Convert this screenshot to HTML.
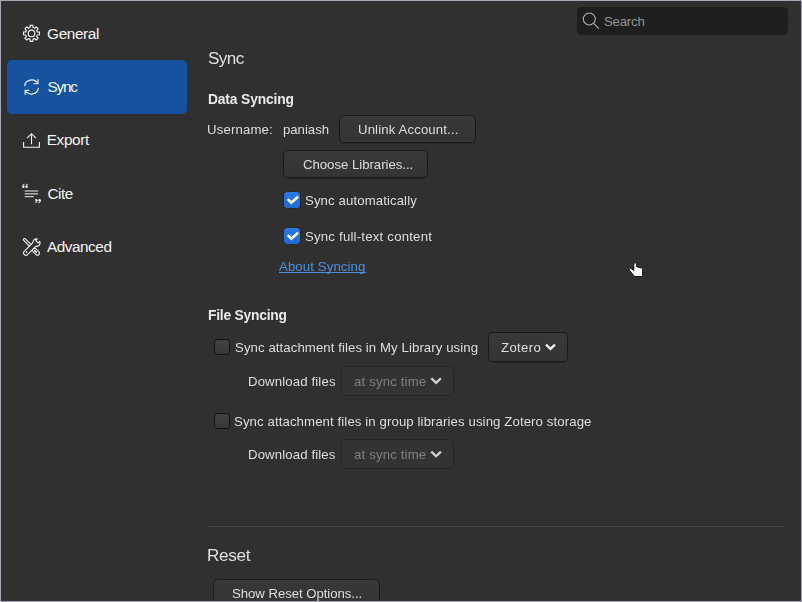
<!DOCTYPE html>
<html>
<head>
<meta charset="utf-8">
<title>Zotero Settings</title>
<style>
html,body{margin:0;padding:0;}
body{width:802px;height:602px;overflow:hidden;background:#303030;font-family:"Liberation Sans",sans-serif;color:#e6e6e6;font-size:13px;position:relative;}
#frame{position:absolute;left:0;top:0;width:800px;height:600px;border:1px solid #a9a7b6;pointer-events:none;z-index:10;}
.abs{position:absolute;white-space:nowrap;}
.g{will-change:transform;}
.btn{position:absolute;box-sizing:border-box;border:1px solid #1a1a1a;border-radius:5px;background:linear-gradient(#383838,#343434);box-shadow:0 1px 0 rgba(0,0,0,0.18);}
.btn.dis{background:#333333;border-color:#252525;box-shadow:none;}
.cb{position:absolute;box-sizing:border-box;width:16px;height:16px;border-radius:3.5px;}
.cb.on{background:linear-gradient(#2879e3,#1f6cd2);box-shadow:0 0 0 0.6px rgba(30,22,16,0.55);}
.cb.off{background:linear-gradient(#434343,#373737);border:1px solid #111111;}
svg{position:absolute;left:0;top:0;overflow:visible;}
</style>
</head>
<body>

<!-- sidebar selection -->
<div style="position:absolute;left:7px;top:60px;width:180px;height:54px;border-radius:5px;background:#15539e;"></div>

<!-- search box -->
<div style="position:absolute;left:577px;top:7px;width:211px;height:28px;border-radius:4.5px;background:#1e1e1e;"></div>

<!-- buttons -->
<div class="btn" style="left:339px;top:115px;width:137px;height:28px;"></div>
<div class="btn" style="left:283px;top:150px;width:145px;height:28px;"></div>
<div class="btn" style="left:488px;top:332px;width:80px;height:30px;"></div>
<div class="btn dis" style="left:341px;top:366px;width:113px;height:30px;"></div>
<div class="btn dis" style="left:341px;top:439px;width:113px;height:30px;"></div>
<div class="btn" style="left:213px;top:579px;width:167px;height:30px;"></div>

<!-- checkboxes -->
<div class="cb on" style="left:284px;top:192px;"></div>
<div class="cb on" style="left:284px;top:228px;"></div>
<div class="cb off" style="left:214px;top:339px;"></div>
<div class="cb off" style="left:214px;top:413px;"></div>

<!-- separator -->
<div style="position:absolute;left:208px;top:526px;width:577px;height:1px;background:#434343;"></div>

<!-- link underline -->
<div style="position:absolute;left:279px;top:272px;width:87px;height:1px;background:#4a90e2;"></div>

<div class="abs" style="left:47.10px;top:26.05px;font-size:15.3px;font-weight:400;color:#f4f4f4;letter-spacing:-0.354px;line-height:15.3px;">General</div>
<div class="abs" style="left:47.40px;top:79.05px;font-size:15.3px;font-weight:400;color:#f4f4f4;letter-spacing:-1.153px;line-height:15.3px;">Sync</div>
<div class="abs" style="left:46.70px;top:132.05px;font-size:15.3px;font-weight:400;color:#f4f4f4;letter-spacing:-0.312px;line-height:15.3px;">Export</div>
<div class="abs" style="left:47.50px;top:186.05px;font-size:15.3px;font-weight:400;color:#f4f4f4;letter-spacing:-0.498px;line-height:15.3px;">Cite</div>
<div class="abs" style="left:46.90px;top:239.05px;font-size:15.3px;font-weight:400;color:#f4f4f4;letter-spacing:-0.433px;line-height:15.3px;">Advanced</div>
<div class="abs" style="left:603.90px;top:14.83px;font-size:13.2px;font-weight:400;color:#939393;letter-spacing:-0.190px;line-height:13.2px;">Search</div>
<div class="abs g" style="left:207.60px;top:50.44px;font-size:17.2px;font-weight:400;color:#e0e0e0;letter-spacing:-0.639px;line-height:17.2px;">Sync</div>
<div class="abs g" style="left:207.70px;top:93.32px;font-size:13.8px;font-weight:700;color:#e9e9e9;letter-spacing:-0.134px;line-height:13.8px;">Data Syncing</div>
<div class="abs g" style="left:207.40px;top:122.83px;font-size:13.2px;font-weight:400;color:#dedede;letter-spacing:0.146px;line-height:13.2px;">Username:</div>
<div class="abs g" style="left:282.90px;top:122.83px;font-size:13.2px;font-weight:400;color:#dedede;letter-spacing:-0.027px;line-height:13.2px;">paniash</div>
<div class="abs g" style="left:357.90px;top:122.83px;font-size:13.2px;font-weight:400;color:#dedede;letter-spacing:0.132px;line-height:13.2px;">Unlink Account...</div>
<div class="abs g" style="left:302.50px;top:157.83px;font-size:13.2px;font-weight:400;color:#dedede;letter-spacing:-0.023px;line-height:13.2px;">Choose Libraries...</div>
<div class="abs g" style="left:304.90px;top:193.83px;font-size:13.2px;font-weight:400;color:#dedede;letter-spacing:0.109px;line-height:13.2px;">Sync automatically</div>
<div class="abs g" style="left:304.80px;top:229.83px;font-size:13.2px;font-weight:400;color:#dedede;letter-spacing:0.212px;line-height:13.2px;">Sync full-text content</div>
<div class="abs g" style="left:279.40px;top:259.83px;font-size:13.2px;font-weight:400;color:#4a90e2;letter-spacing:0.108px;line-height:13.2px;">About Syncing</div>
<div class="abs g" style="left:207.70px;top:309.32px;font-size:13.8px;font-weight:700;color:#e9e9e9;letter-spacing:-0.213px;line-height:13.8px;">File Syncing</div>
<div class="abs g" style="left:234.60px;top:340.53px;font-size:13.2px;font-weight:400;color:#dedede;letter-spacing:0.084px;line-height:13.2px;">Sync attachment files in My Library using</div>
<div class="abs g" style="left:500.80px;top:340.83px;font-size:13.2px;font-weight:400;color:#dedede;letter-spacing:0.324px;line-height:13.2px;">Zotero</div>
<div class="abs g" style="left:247.50px;top:374.53px;font-size:13.2px;font-weight:400;color:#dedede;letter-spacing:0.133px;line-height:13.2px;">Download files</div>
<div class="abs g" style="left:354.40px;top:374.53px;font-size:13.2px;font-weight:400;color:#808080;letter-spacing:0.162px;line-height:13.2px;">at sync time</div>
<div class="abs g" style="left:234.40px;top:415.13px;font-size:13.2px;font-weight:400;color:#dedede;letter-spacing:0.105px;line-height:13.2px;">Sync attachment files in group libraries using Zotero storage</div>
<div class="abs g" style="left:247.60px;top:447.83px;font-size:13.2px;font-weight:400;color:#dedede;letter-spacing:0.125px;line-height:13.2px;">Download files</div>
<div class="abs g" style="left:354.40px;top:447.83px;font-size:13.2px;font-weight:400;color:#808080;letter-spacing:0.162px;line-height:13.2px;">at sync time</div>
<div class="abs g" style="left:207.10px;top:547.44px;font-size:17.2px;font-weight:400;color:#e0e0e0;letter-spacing:-0.356px;line-height:17.2px;">Reset</div>
<div class="abs g" style="left:232.40px;top:586.53px;font-size:13.2px;font-weight:400;color:#dedede;letter-spacing:-0.047px;line-height:13.2px;">Show Reset Options...</div>

<!-- icons & vector art, page coordinates -->
<svg width="802" height="602" viewBox="0 0 802 602" fill="none">
  <!-- gear -->
  <g stroke="#f4f4f4" stroke-width="1.1" stroke-linejoin="miter">
    <path d="M30.00 27.59L30.20 25.41L32.80 25.41L33.00 27.59A6.0 6.0 0 0 1 34.55 28.23L36.23 26.83L38.07 28.67L36.67 30.35A6.0 6.0 0 0 1 37.31 31.90L39.49 32.10L39.49 34.70L37.31 34.90A6.0 6.0 0 0 1 36.67 36.45L38.07 38.13L36.23 39.97L34.55 38.57A6.0 6.0 0 0 1 33.00 39.21L32.80 41.39L30.20 41.39L30.00 39.21A6.0 6.0 0 0 1 28.45 38.57L26.77 39.97L24.93 38.13L26.33 36.45A6.0 6.0 0 0 1 25.69 34.90L23.51 34.70L23.51 32.10L25.69 31.90A6.0 6.0 0 0 1 26.33 30.35L24.93 28.67L26.77 26.83L28.45 28.23A6.0 6.0 0 0 1 30.00 27.59Z"/>
    <circle cx="31.5" cy="33.4" r="3.3"/>
  </g>
  <!-- sync -->
  <g stroke="#f4f4f4" stroke-width="1.15" stroke-linecap="butt">
    <path d="M24.55 86.1A7 7 0 0 1 37.7 83.7"/>
    <path d="M37.95 79.3V83.7H33.6"/>
    <path d="M38.45 87.9A7 7 0 0 1 25.3 90.3"/>
    <path d="M25.15 94.8V90.4H29.3"/>
  </g>
  <!-- export -->
  <g stroke="#f4f4f4" stroke-width="1.1">
    <path d="M31.5 133.6V144.3"/>
    <path d="M27.1 138.2L31.5 133.7L35.9 138.2"/>
    <path d="M23.6 142V147.3H39.4V142"/>
  </g>
  <!-- cite -->
  <g fill="#f4f4f4" stroke="none">
    <rect x="24.7" y="190.5" width="13.5" height="1" />
    <rect x="24.7" y="193.4" width="13.5" height="1" />
    <rect x="24.7" y="196.2" width="9" height="1" />
    <!-- open quotes -->
    <circle cx="23.4" cy="186.7" r="1.2"/><path d="M22.55 186.50Q22.50 184.40 24.55 184.15" fill="none" stroke="#f4f4f4" stroke-width="0.95"/>
    <circle cx="26.7" cy="186.7" r="1.2"/><path d="M25.85 186.50Q25.80 184.40 27.85 184.15" fill="none" stroke="#f4f4f4" stroke-width="0.95"/>
    <!-- close quotes -->
    <circle cx="36.3" cy="200.3" r="1.2"/><path d="M37.15 200.50Q37.20 202.60 35.15 202.85" fill="none" stroke="#f4f4f4" stroke-width="0.95"/>
    <circle cx="39.6" cy="200.3" r="1.2"/><path d="M40.45 200.50Q40.50 202.60 38.45 202.85" fill="none" stroke="#f4f4f4" stroke-width="0.95"/>
  </g>
  <!-- advanced: wrench + screwdriver -->
  <g stroke="#f4f4f4" stroke-width="1.1" stroke-linejoin="round" stroke-linecap="round">
    <!-- screwdriver blade -->
    <path d="M31.08 244.72L25.28 238.92A1.1 1.1 0 0 0 23.72 240.48L29.52 246.28"/>
    <!-- screwdriver handle -->
    <path d="M34.41 247.39L38.91 251.89A2 2 0 0 1 36.09 254.71L31.59 250.21Z"/>
    <path d="M34.6 250.4L36.4 252.2" stroke-width="1.4"/>
    <!-- wrench -->
    <path d="M35.73 246.33L27.53 254.53A2.3 2.3 0 0 1 24.27 251.27L32.87 242.67A3.6 3.6 0 0 1 37.35 238.96L35.72 240.59L38.11 242.98L39.74 241.35A3.6 3.6 0 0 1 35.73 246.33Z" fill="#303030"/>
    <circle cx="26.4" cy="252.1" r="0.5" fill="#f4f4f4" stroke-width="0.6"/>
  </g>
  <!-- search icon -->
  <g stroke="#b4b4b4" stroke-width="1.05">
    <circle cx="589.3" cy="19" r="6"/>
    <path d="M593.6 23.3L598.9 28.7"/>
  </g>
  <!-- check marks -->
  <g stroke="#ffffff" stroke-width="2.5" stroke-linecap="butt" stroke-linejoin="miter">
    <path d="M287.8 199.2L291.3 202.7L298.0 196.7"/>
    <path d="M287.8 235.2L291.3 238.7L298.0 232.7"/>
  </g>
  <!-- chevrons -->
  <g stroke-width="2.25" stroke-linecap="butt" stroke-linejoin="miter">
    <path d="M546.0 344.6L550.5 348.9L555.0 344.6" stroke="#f2f2f2"/>
    <path d="M431.3 378.3L436.1 382.9L440.9 378.3" stroke="#d4d4d4"/>
    <path d="M431.3 451.6L436.1 456.2L440.9 451.6" stroke="#d4d4d4"/>
  </g>
  <!-- mouse cursor (pointing hand) -->
  <g>
    <path d="M633.8 263.5q1.4-1.4 2.8 0V266.6l5 1.5q1 .4 1 1.6V275.3q0 1.2-1.2 1.2H635.2q-.8 0-1.4-.8L629.5 270.2q-.6-1 .4-1.6 1-.6 1.8.2L633.8 270.6z" fill="#ffffff" stroke="#000000" stroke-width="0.9" stroke-linejoin="round"/>
  </g>
</svg>

<div id="frame"></div>
</body>
</html>
